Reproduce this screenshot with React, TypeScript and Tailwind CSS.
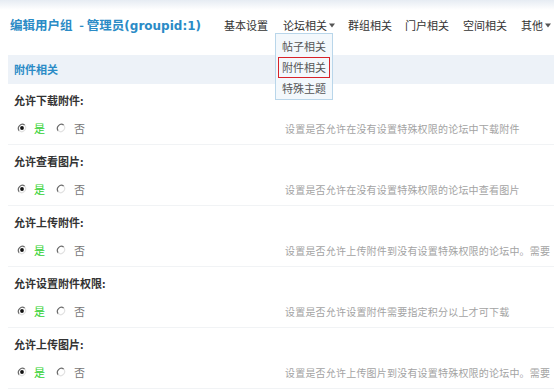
import React from "react";

const CJK = '"Noto Sans CJK SC", "Liberation Sans", sans-serif';

function Radio({ checked }: { checked: boolean }) {
  return (
    <svg width="10" height="10" viewBox="0 0 10 10" className="shrink-0">
      <circle cx="5" cy="5" r="4" fill="#fff" />
      <path d="M2.2 7.8 A4 4 0 0 1 7.8 2.2" fill="none" stroke="#6b6b6b" strokeWidth="1.2" />
      <path d="M7.8 2.2 A4 4 0 0 1 2.2 7.8" fill="none" stroke="#e2e2e2" strokeWidth="1.2" />
      {checked && <circle cx="5" cy="5" r="1.9" fill="#111" />}
    </svg>
  );
}

function Arrow() {
  return (
    <svg width="6" height="5" viewBox="0 0 6 5" className="ml-[2px] inline-block">
      <path d="M0 0.5 L6 0.5 L3 4.5 Z" fill="#555" />
    </svg>
  );
}

const rows = [
  { label: "允许下载附件:", desc: "设置是否允许在没有设置特殊权限的论坛中下载附件" },
  { label: "允许查看图片:", desc: "设置是否允许在没有设置特殊权限的论坛中查看图片" },
  { label: "允许上传附件:", desc: "设置是否允许上传附件到没有设置特殊权限的论坛中。需要" },
  { label: "允许设置附件权限:", desc: "设置是否允许设置附件需要指定积分以上才可下载" },
  { label: "允许上传图片:", desc: "设置是否允许上传图片到没有设置特殊权限的论坛中。需要" },
];

export default function App() {
  return (
    <div
      className="relative w-[554px] h-[389px] overflow-hidden bg-white"
      style={{ fontFamily: CJK }}
    >
      <div className="absolute left-0 top-0 w-full h-[10px] bg-gradient-to-b from-[#e6ecf3] to-white" />
      {/* header */}
      <div className="relative flex items-center h-[50px] pl-[10px] whitespace-nowrap">
        <div className="w-[214px] shrink-0 text-[12.5px] font-bold text-[#2a8bc6] leading-none">
          编辑用户组 <span className="ml-[4px]">- 管理员</span>
          <span style={{ fontFamily: '"DejaVu Sans", sans-serif' }} className="text-[12px]">(groupid:1)</span>
        </div>
        <div className="flex shrink-0 items-center text-[11px] text-[#333] leading-none">
          <span>基本设置</span>
          <span className="ml-[15px] flex items-center">论坛相关<Arrow /></span>
          <span className="ml-[13px]">群组相关</span>
          <span className="ml-[13px]">门户相关</span>
          <span className="ml-[14px]">空间相关</span>
          <span className="ml-[14px] flex items-center">其他<Arrow /></span>
        </div>
      </div>

      {/* section band */}
      <div className="mt-[5px] ml-[8px] h-[29px] bg-[#edf2f8] flex items-center pl-[6px] text-[11px] font-bold text-[#2a8bc6]">
        附件相关
      </div>

      {rows.map((r, i) => (
        <div key={i} className="ml-[8px] pt-[8px] pb-[8px] border-b border-[#f1f3f5]">
          <div className="h-[16px] flex items-center pl-[6px] text-[11px] font-bold text-[#333]">
            {r.label}
          </div>
          <div className="mt-[12px] h-[16px] flex items-center whitespace-nowrap">
            <div className="w-[277px] shrink-0 flex items-center pl-[9px] text-[11px]">
              <Radio checked />
              <span className="ml-[7px] text-[#2fd12f]">是</span>
              <span className="ml-[11px]"><Radio checked={false} /></span>
              <span className="ml-[8px] text-[#777]">否</span>
            </div>
            <div className="shrink-0 text-[10px] tracking-[0.2px] text-[#a3a3a3]">{r.desc}</div>
          </div>
        </div>
      ))}

      {/* dropdown */}
      <div className="absolute left-[275px] top-[33px] w-[58px] h-[67px] border border-[#b9d6ea] bg-[#f3f8fc] flex flex-col items-center pt-[2px] text-[11px] text-[#555] leading-none">
        <div className="h-[21px] w-[52px] flex items-center justify-center">帖子相关</div>
        <div className="h-[21px] w-[52px] flex items-center justify-center border-[1.5px] border-[#d8232a]">附件相关</div>
        <div className="h-[21px] w-[52px] flex items-center justify-center">特殊主题</div>
      </div>
    </div>
  );
}
